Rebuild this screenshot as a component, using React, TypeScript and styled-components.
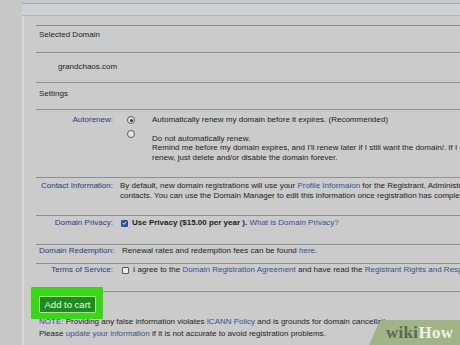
import React from "react";
import styled, { createGlobalStyle } from "styled-components";

const Global = createGlobalStyle`
  html, body { margin: 0; padding: 0; background: #c6c7c6; }
  * { box-sizing: border-box; }
`;

const Page = styled.div`
  width: 460px;
  height: 345px;
  overflow: hidden;
  position: relative;
  display: flex;
  background: #c6c7c6;
  font-family: "Liberation Sans", Arial, sans-serif;
  font-size: 8px;
  color: #1d1d1d;
`;

const Gutter = styled.div`
  width: 22px;
  flex-shrink: 0;
  background: #c7c8c7;
`;

const Main = styled.div`
  flex: 1;
  min-width: 0;
  display: flex;
  flex-direction: column;
`;

const TopStrip = styled.div`
  height: 16px;
  padding-top: 3px;
  background: #c9c9cb;
`;

const Band = styled.div`
  height: 13px;
  background: #cfd0d1;
  border-top: 1px solid #a6a8b8;
  border-bottom: 1px solid #b3b4b3;
`;

const Panel = styled.div`
  flex: 1;
  background: #cacbca;
  border-left: 2px solid #d6d7d6;
  padding: 9px 0 0 12px;
`;

const Row = styled.div<{ $h: number; $pt: number; $pl?: number }>`
  height: ${(p) => p.$h}px;
  padding-top: ${(p) => p.$pt}px;
  padding-left: ${(p) => p.$pl ?? 3}px;
  border-top: 1px solid #8f908f;
  line-height: 10px;
  display: flex;
  white-space: nowrap;
`;

const Label = styled.div`
  width: 74px;
  flex-shrink: 0;
  text-align: right;
  color: #2b3d7a;
  margin-right: 7px;
`;

const Value = styled.div<{ $pl?: number }>`
  padding-left: ${(p) => p.$pl ?? 0}px;
  line-height: 9.5px;
  white-space: nowrap;
`;

const Link = styled.span`
  color: #3b4f96;
`;

const Strong = styled.span`
  font-weight: bold;
  color: #222;
`;

const Option = styled.div<{ $mt?: number }>`
  display: flex;
  align-items: flex-start;
  margin-top: ${(p) => p.$mt ?? 0}px;
`;

const RadioCell = styled.div<{ $mt: number }>`
  width: 32px;
  padding-left: 7px;
  padding-top: ${(p) => p.$mt}px;
  flex-shrink: 0;
`;

const Radio = styled.span<{ $on?: boolean }>`
  display: block;
  width: 8px;
  height: 8px;
  border-radius: 50%;
  border: 1px solid #5a5a5a;
  background: #e6e6e6;
  position: relative;
  &::after {
    content: "";
    display: ${(p) => (p.$on ? "block" : "none")};
    position: absolute;
    left: 1.5px;
    top: 1.5px;
    width: 3px;
    height: 3px;
    border-radius: 50%;
    background: #333;
  }
`;

const OptionText = styled.div<{ $pt: number }>`
  padding-top: ${(p) => p.$pt}px;
  line-height: 9.5px;
`;

const CheckRow = styled.div`
  display: flex;
  align-items: center;
  gap: 4px;
  line-height: 10px;
`;

const Box = styled.span<{ $on?: boolean }>`
  display: inline-flex;
  align-items: center;
  justify-content: center;
  width: 7px;
  height: 7px;
  border: 1px solid ${(p) => (p.$on ? "#2c4c9c" : "#555")};
  background: ${(p) => (p.$on ? "#2f55a8" : "#ececec")};
  border-radius: 1px;
`;

const ButtonArea = styled.div`
  border-top: 1px solid #8f908f;
  padding: 4px 0 0 3px;
`;

const ButtonWrap = styled.div`
  position: relative;
  display: inline-block;
  vertical-align: top;
`;

const Highlight = styled.span`
  position: absolute;
  top: -9px;
  left: -8px;
  right: -7px;
  bottom: -6px;
  background: #38d817;
  border-radius: 1px;
`;

const CartButton = styled.button`
  position: relative;
  z-index: 1;
  display: block;
  width: 57px;
  height: 17px;
  padding: 0;
  margin: 0;
  background: #1e8c1c;
  border: 1px solid #a6e28f;
  border-radius: 1px;
  color: #eef7ea;
  font-family: "Liberation Sans", Arial, sans-serif;
  font-size: 9.5px;
  line-height: 15px;
  text-align: center;
`;

const Notes = styled.div`
  margin-top: 3px;
  padding-left: 3px;
  line-height: 12px;
  white-space: nowrap;
  color: #1d1d1d;
`;

const Watermark = styled.div`
  position: absolute;
  right: 0;
  bottom: 0;
  width: 95px;
  height: 25px;
`;

const WatermarkText = styled.div`
  position: absolute;
  left: 21px;
  top: 3px;
  font-family: "Liberation Serif", "DejaVu Serif", serif;
  font-weight: bold;
  font-size: 17px;
  line-height: 20px;
  letter-spacing: 0.3px;
  white-space: nowrap;
`;

const Wiki = styled.span`
  color: #5a6a4c;
`;

const How = styled.span`
  color: #eef2e6;
`;

export default function App() {
  return (
    <Page>
      <Global />
      <Gutter />
      <Main>
        <TopStrip>
          <Band />
        </TopStrip>
        <Panel>
          <Row $h={27} $pt={4}>Selected Domain</Row>
          <Row $h={30} $pt={9} $pl={22}>grandchaos.com</Row>
          <Row $h={27} $pt={6}>Settings</Row>
          <Row $h={68} $pt={5}>
            <Label>Autorenew:</Label>
            <Value>
              <Option>
                <RadioCell $mt={1}>
                  <Radio $on />
                </RadioCell>
                <OptionText $pt={0}>
                  Automatically renew my domain before it expires. (Recommended)
                </OptionText>
              </Option>
              <Option $mt={5}>
                <RadioCell $mt={0}>
                  <Radio />
                </RadioCell>
                <OptionText $pt={4}>
                  Do not automatically renew.
                  <br />
                  Remind me before my domain expires, and I'll renew later if I still want the domain/. If I change my mind and don't want to
                  <br />
                  renew, just delete and/or disable the domain forever.
                </OptionText>
              </Option>
            </Value>
          </Row>
          <Row $h={38} $pt={3}>
            <Label>Contact Information:</Label>
            <Value>
              By default, new domain registrations will use your <Link>Profile Informaion</Link> for the Registrant, Administrative, Technical and Billing
              <br />
              contacts. You can use the Domain Manager to edit this information once registration has completed.
            </Value>
          </Row>
          <Row $h={29} $pt={2}>
            <Label>Domain Privacy:</Label>
            <Value $pl={1}>
              <CheckRow>
                <Box $on>
                  <svg width="6" height="6" viewBox="0 0 6 6">
                    <path d="M1 3.2 L2.4 4.6 L5 1.4" stroke="#fff" strokeWidth="1.2" fill="none" />
                  </svg>
                </Box>
                <span>
                  <Strong>Use Privacy ($15.00 per year ).</Strong> <Link>What is Domain Privacy?</Link>
                </span>
              </CheckRow>
            </Value>
          </Row>
          <Row $h={19} $pt={1}>
            <Label>Domain Redemption:</Label>
            <Value $pl={2}>
              Renewal rates and redemption fees can be found <Link>here</Link>.
            </Value>
          </Row>
          <Row $h={28} $pt={1}>
            <Label>Terms of Service:</Label>
            <Value $pl={2}>
              <CheckRow>
                <Box />
                <span>
                  I agree to the <Link>Domain Registration Agreement</Link> and have read the <Link>Registrant Rights and Responsibilities</Link>.
                </span>
              </CheckRow>
            </Value>
          </Row>
          <ButtonArea>
            <ButtonWrap>
              <Highlight />
              <CartButton type="button">Add to cart</CartButton>
            </ButtonWrap>
          </ButtonArea>
          <Notes>
            <Link>NOTE:</Link> Providing any false information violates <Link>ICANN Policy</Link> and is grounds for domain cancellation.
            <br />
            Please <Link>update your information</Link> if it is not accurate to avoid registration problems.
          </Notes>
        </Panel>
      </Main>
      <Watermark>
        <svg width="95" height="25" viewBox="0 0 95 25">
          <path d="M18 0 H95 V25 H4 L14 3 Q15.5 0 18 0 Z" fill="#a0b487" />
        </svg>
        <WatermarkText>
          <Wiki>wiki</Wiki>
          <How>How</How>
        </WatermarkText>
      </Watermark>
    </Page>
  );
}
